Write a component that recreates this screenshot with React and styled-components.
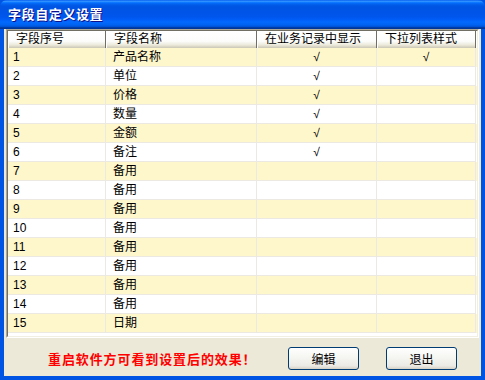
import styled, { createGlobalStyle } from 'styled-components';

const GlobalStyle = createGlobalStyle`
  html, body {
    margin: 0;
    padding: 0;
    background: #ece9d8;
  }
  body {
    font-family: "Liberation Sans", "Noto Sans CJK SC", sans-serif;
    font-size: 12px;
  }
`;

const fields = [
  { no: 1, name: '产品名称', show: true, drop: true },
  { no: 2, name: '单位', show: true },
  { no: 3, name: '价格', show: true },
  { no: 4, name: '数量', show: true },
  { no: 5, name: '金额', show: true },
  { no: 6, name: '备注', show: true },
  { no: 7, name: '备用' },
  { no: 8, name: '备用' },
  { no: 9, name: '备用' },
  { no: 10, name: '备用' },
  { no: 11, name: '备用' },
  { no: 12, name: '备用' },
  { no: 13, name: '备用' },
  { no: 14, name: '备用' },
  { no: 15, name: '日期' },
];

const columns = [
  { title: '字段序号', width: 98 },
  { title: '字段名称', width: 151 },
  { title: '在业务记录中显示', width: 120 },
  { title: '下拉列表样式', width: 99 },
];

const App = () => {
  return (
    <>
      <GlobalStyle />
      <Window>
        <TitleBar>
          <span>字段自定义设置</span>
        </TitleBar>
        <Body>
          <GridOuter>
            <GridInner>
              <HeaderRow>
                {columns.map((col) => (
                  <HeaderCell key={col.title} $w={col.width}>
                    {col.title}
                  </HeaderCell>
                ))}
              </HeaderRow>
              {fields.map((f) => (
                <Row key={f.no} $odd={f.no % 2 === 1}>
                  <Cell $w={98}>{f.no}</Cell>
                  <Cell $w={151}>{f.name}</Cell>
                  <Cell $w={120} $center>{f.show ? '√' : ''}</Cell>
                  <Cell $w={99} $center>{f.drop ? '√' : ''}</Cell>
                </Row>
              ))}
            </GridInner>
          </GridOuter>
          <Footer>
            <Notice>重启软件方可看到设置后的效果！</Notice>
            <Button>编辑</Button>
            <Button>退出</Button>
          </Footer>
        </Body>
      </Window>
    </>
  );
};

const Window = styled.div`
  width: 485px;
  height: 380px;
  display: flex;
  flex-direction: column;
  background: #0054e3;
  box-sizing: border-box;
`;

const TitleBar = styled.div`
  height: 29px;
  flex-shrink: 0;
  display: flex;
  align-items: center;
  padding: 0 0 3px 8px;
  box-sizing: border-box;
  border-radius: 7px 7px 0 0;
  background: linear-gradient(
    #0058ee 0%,
    #3593ff 4%,
    #288eff 6%,
    #127dff 8%,
    #036ffc 10%,
    #0262ee 14%,
    #0057e5 20%,
    #0054e3 24%,
    #0055eb 56%,
    #005bf5 66%,
    #026afe 76%,
    #0062ef 86%,
    #0052d6 92%,
    #0040ab 94%,
    #003092 100%
  );

  span {
    color: #fff;
    font-family: "Noto Sans CJK SC", sans-serif;
    font-weight: bold;
    font-size: 13px;
    letter-spacing: 0.6px;
    text-shadow: 1px 1px #0f1089;
  }
`;

const Body = styled.div`
  flex: 1;
  display: flex;
  flex-direction: column;
  margin: 0 4px 4px 4px;
  padding: 0 2px 0 2px;
  background: #ece9d8;
`;

const GridOuter = styled.div`
  border: 1px solid;
  border-color: #aca899 #fff #fff #aca899;
`;

const GridInner = styled.div`
  height: 305px;
  overflow: hidden;
  background: #fff;
  border: 1px solid;
  border-color: #716f64 #f1efe2 #f1efe2 #716f64;
`;

const HeaderRow = styled.div`
  display: flex;
  height: 17px;
`;

const HeaderCell = styled.div`
  width: ${({ $w }) => $w}px;
  flex-shrink: 0;
  box-sizing: border-box;
  padding-left: 7px;
  line-height: 16px;
  color: #000;
  background: linear-gradient(#fff 0%, #fcfcfb 60%, #ebeadb 82%, #e2decd 88%, #d6d2c2 94%, #cbc7b8 100%);
  border-right: 1px solid #716f64;
  border-left: 1px solid #fff;
  white-space: nowrap;
`;

const Row = styled.div`
  display: flex;
  height: 19px;
  background: ${({ $odd }) => ($odd ? '#fff7cc' : '#fff')};
`;

const Cell = styled.div`
  width: ${({ $w }) => $w}px;
  flex-shrink: 0;
  box-sizing: border-box;
  padding-left: ${({ $center }) => ($center ? 0 : 5)}px;
  text-align: ${({ $center }) => ($center ? 'center' : 'left')};
  line-height: 18px;
  color: #000;
  border-right: 1px solid #ebe9e1;
  border-bottom: 1px solid #ebe9e1;
  white-space: nowrap;

  &:nth-child(2) {
    padding-left: 7px;
  }
`;

const Footer = styled.div`
  flex: 1;
  display: flex;
  align-items: center;
  padding: 2px 22px 0 42px;
`;

const Notice = styled.div`
  flex: 1;
  color: #ff0000;
  font-family: "Noto Sans CJK SC", sans-serif;
  font-weight: bold;
  font-size: 13px;
  letter-spacing: 0.9px;
`;

const Button = styled.button`
  width: 71px;
  height: 23px;
  margin-left: 27px;
  padding: 0;
  border: 1px solid #003c74;
  border-radius: 3px;
  background: linear-gradient(#fff 0%, #f4f4f0 50%, #eceae4 85%, #d6d0c5 100%);
  font-family: "Noto Sans CJK SC", sans-serif;
  font-size: 12px;
  color: #000;
  &:first-of-type {
    margin-left: 0;
  }
`;

export default App;
